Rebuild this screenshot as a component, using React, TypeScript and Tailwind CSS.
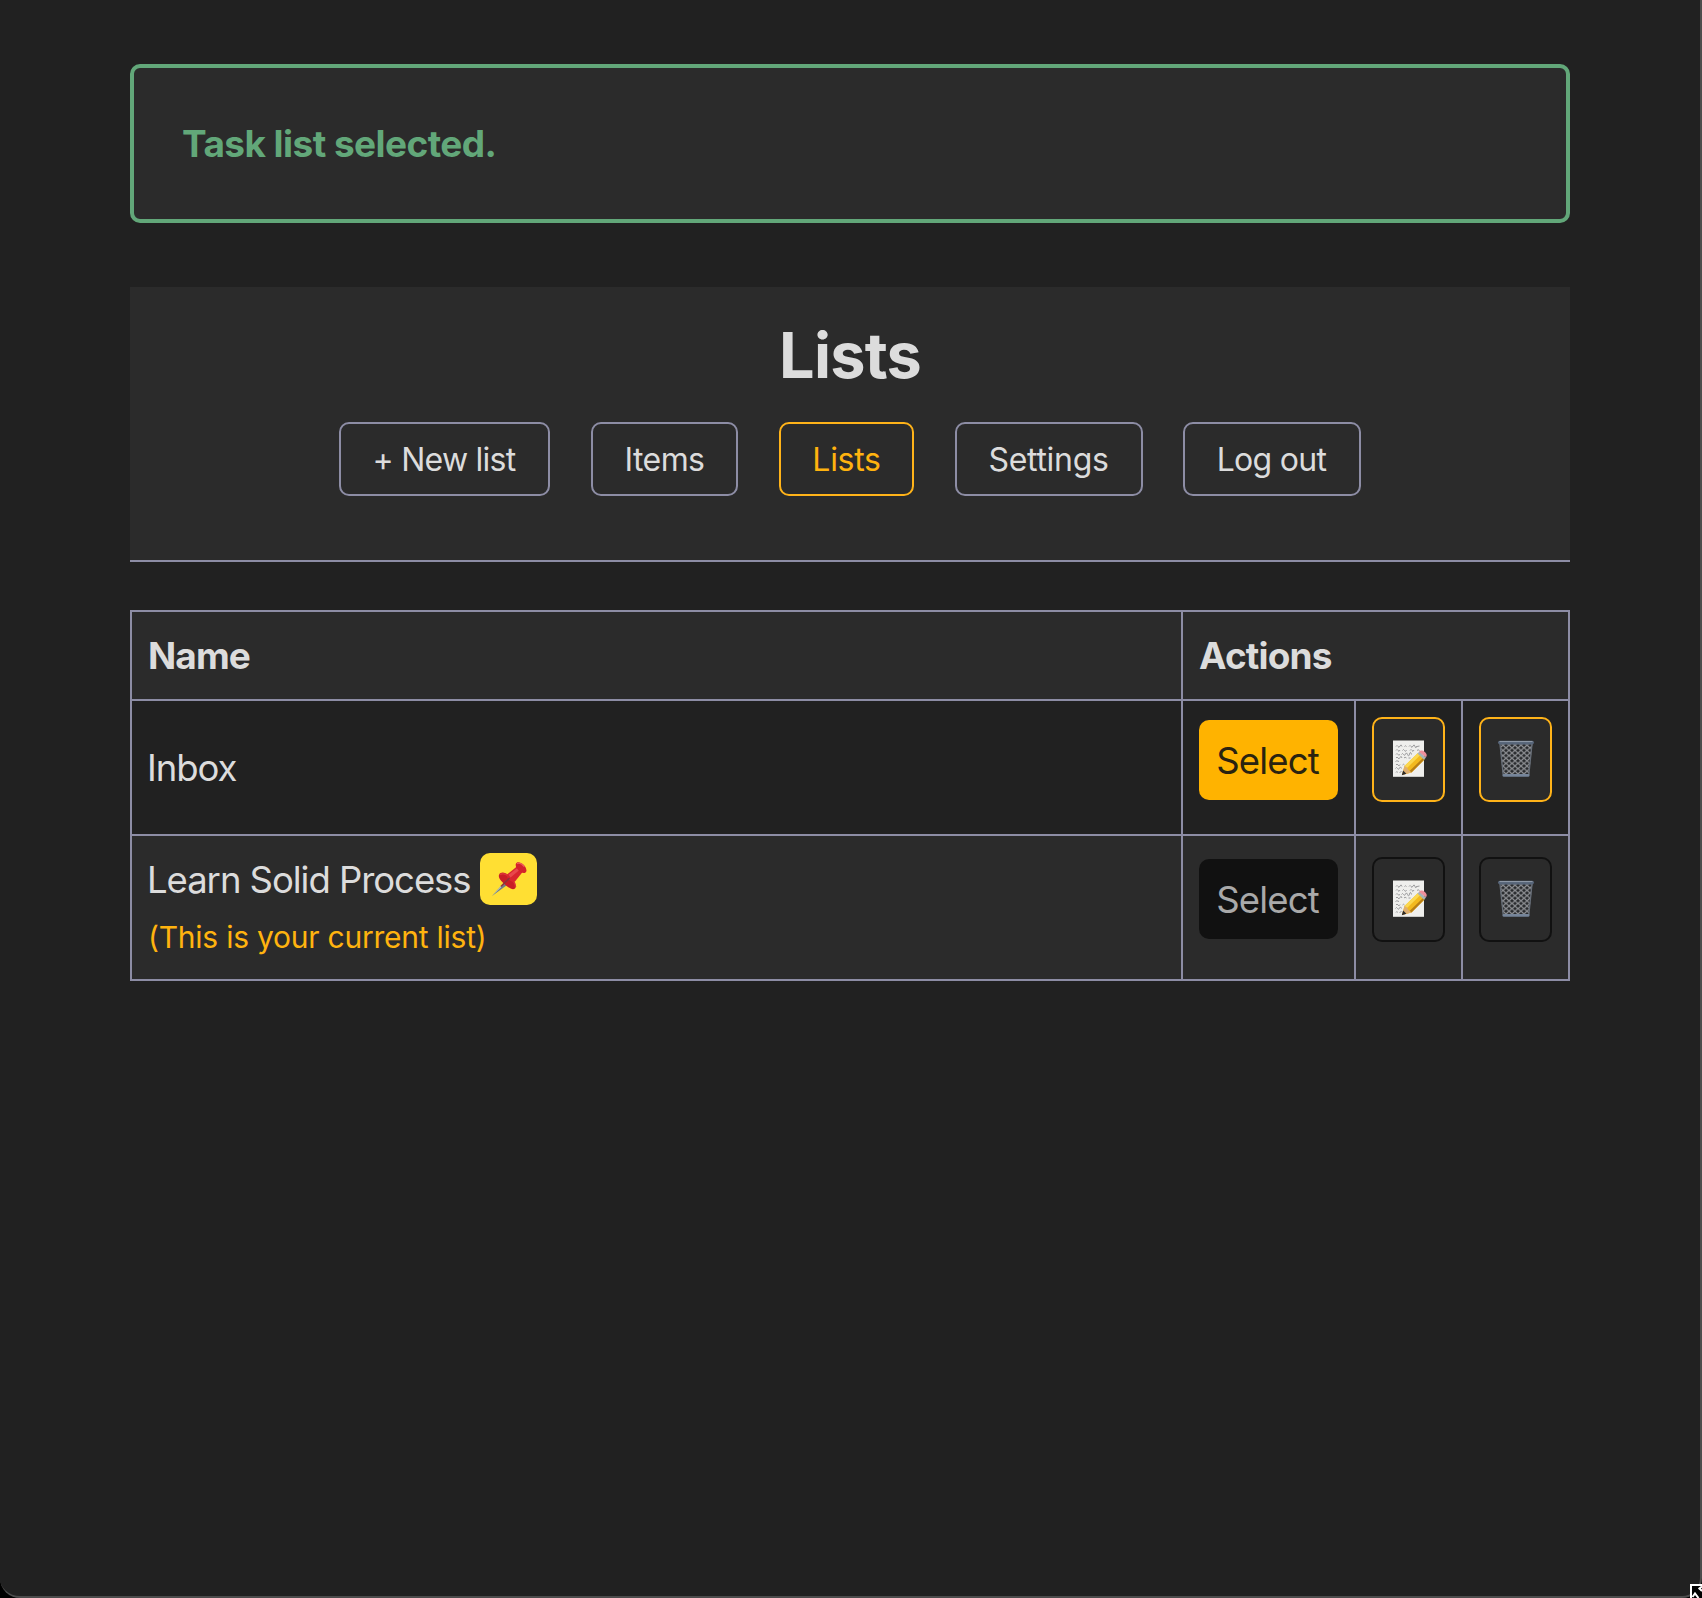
import type { ReactNode } from "react";

function PinIcon() {
  return (
    <svg width="36" height="36" viewBox="0 0 36 36" className="block">
      <path d="M1 35 13 21.5 15.8 24.2Z" fill="#6f8187" />
      <path d="M1 35 13 21.5 14 22.5Z" fill="#c3ccc4" />
      <path d="M8 14c1.500-3.500 6-3 9 .2 3.600 2.800 8.500 9 7.600 12.300-1 3-5.400 1.700-9-1.500C11.500 21.500 6.800 17.300 8 14Z" fill="#c81e26" />
      <path d="M9 13.500c3-1.500 6.500-.5 9.500 2.500 3 2.500 6 6.500 6 10" fill="none" stroke="#dd3439" strokeWidth="1.500" />
      <path d="M16 13.500 26.500 5l5.500 5.500-8 10c-2 1-4 0-6-2-1.500-1.500-2.500-3.500-2-5Z" fill="#d9262e" />
      <path d="M17.500 13.800 27 6.500l2 2-9.500 8Z" fill="#e9474c" />
      <path d="M25 2.500c1.500-2.500 5-1 7.500 1.300 2.500 2.500 4 6 2 7.700-2 1.500-5-.3-7-2.300C25.500 7 24 4.500 25 2.500Z" fill="#d3222b" />
      <path d="M26.500 2.500c2-1 4.500.5 6.500 2.800" fill="none" stroke="#ee5a5a" strokeWidth="1.300" strokeLinecap="round" />
      <path d="M10 25.500 18.500 17" stroke="#8d3438" strokeWidth="1.600" />
    </svg>
  );
}

function MemoIcon() {
  return (
    <svg width="36" height="38" viewBox="0 0 36 38" className="block">
      <rect x="2" y="0.500" width="31" height="36.500" fill="#efefed" />
      <path d="M2 36.500h31" stroke="#c9c9c7" />
      <g fill="none" stroke="#9a9a9c" strokeWidth="1">
        <path d="M5 6.500q1-2 2 0t2-.5 2 .5M13.500 6.500q1-1.500 2 0M18 6.500q1-2 2 0t2-.5 2 .5 1.500-.5M26 6.500l2.500-.5" />
        <path d="M5 10.500q1-2 2 0t2-.5M11.500 10.500q1-2 2 0t2-.5M19 10.500q1-2 2 0t2-.5M26 10.500q1-1.500 2.500 0" />
        <path d="M5 14.500q1-2 2 0t1.500-.5M10.500 14.500q1-2 2 0t2-.5 2 .5 2-.5 2 .5" />
        <path d="M5 18q1-2 2 0t2-.5 2 .5M13 18q1-1.500 2.500 0M17.500 18h2" />
        <path d="M4.500 21.500q1-1.500 3.500 0M5 25q1-2 2 0t2-.5M11.500 25q1-1.500 2 0" />
        <path d="M4.500 28.500q1-2 2 0t2-.5 2 .5M5 32.500q1-2 1.500 0M8.500 32.500l2-1" />
      </g>
      <path d="M11 35 13.500 26 27 13 33.500 19.500 20.500 32.500Z" fill="#f2b91f" />
      <path d="M13.500 26 27 13 29.200 15.200 15.500 28.500Z" fill="#fbd850" />
      <path d="M18.500 31 32 18 33.500 19.500 20.500 32.500Z" fill="#b97f14" />
      <path d="M11 35 13.500 26 16 27.500 17.500 30 20.500 32.500Z" fill="#dfb070" />
      <path d="M10.800 35.300 12.100 30.600 15.400 33.800Z" fill="#2d2b2a" />
      <path d="M26.500 13.500 28.500 11.500 35 17.500 33 19.800Z" fill="#a9b3b6" />
      <path d="M28 12c1.500-2 4-1.800 5.500-.2 2 1.500 3 3.500 1.500 5.400Z" fill="#ee8e9a" />
    </svg>
  );
}

function TrashIcon() {
  return (
    <svg width="38" height="38" viewBox="0 0 38 38" className="block">
      <defs>
        <pattern id="mesh" width="6" height="5.200" patternUnits="userSpaceOnUse">
          <path d="M0 0 6 5.200M6 0 0 5.200" stroke="#8a8c90" strokeWidth="1.200" />
        </pattern>
      </defs>
      <path d="M2.500 3h33L32 36H6Z" fill="#292b2e" />
      <path d="M2.500 3h33L32 36H6Z" fill="url(#mesh)" />
      <path d="M3 4 6.200 35M35 4 31.800 35" stroke="#666d77" strokeWidth="1.300" />
      <rect x="5.500" y="34" width="27" height="2.800" rx="1.400" fill="#76859a" />
      <rect x="1" y="0.800" width="36" height="3.600" rx="1.800" fill="#566478" />
      <path d="M2.500 1.600h33" stroke="#929dac" strokeWidth="1" />
    </svg>
  );
}

function NavButton({ className, children }: { className: string; children: ReactNode }) {
  return (
    <a className={`flex h-[74px] items-center justify-center whitespace-nowrap rounded-[10px] border-2 pt-[2px] text-[32px] leading-none ${className}`}>
      {children}
    </a>
  );
}

function IconButton({ muted, children }: { muted?: boolean; children: ReactNode }) {
  return (
    <button
      className={`flex h-[85px] w-[73px] justify-center rounded-[10px] border-2 bg-[#2b2b2b] pt-[21px] ${muted ? "border-[#111111]" : "border-[#ffb319]"}`}
    >
      {children}
    </button>
  );
}

function SelectButton({ muted }: { muted?: boolean }) {
  return (
    <button
      className={`flex h-20 w-[139px] items-center justify-center rounded-[10px] pr-[2px] pt-[2px] text-[36.500px] leading-none tracking-[-0.850px] ${muted ? "bg-[#111111] text-[#a9a9a9]" : "bg-[#ffb300] text-[#2a2310]"}`}
    >
      Select
    </button>
  );
}

function ResizeCursor() {
  return (
    <svg width="12" height="14" viewBox="0 0 12 14" className="absolute bottom-0 right-0">
      <path d="M0 0h12v14H0Z" fill="#fff" />
      <path d="M2 2h10v12H2Z" fill="#000" />
      <path d="M2.500 13 5 9.500 8.500 14M8.500 5 12 2.500M9 4l3 3" fill="none" stroke="#fff" strokeWidth="2" />
    </svg>
  );
}

export default function App() {
  return (
    <div className="relative h-[1598px] w-[1702px] overflow-hidden bg-black font-['Inter',sans-serif] text-[#dcdcdc]">
      <div className="h-full w-full overflow-hidden rounded-b-[20px] border-b-2 border-r-2 border-[#4c4c4c] bg-[#212121] pl-[130px] pt-16">
        <div className="flex h-[159px] w-[1440px] rounded-[10px] border-4 border-[#62a779] bg-[#2b2b2b] pl-[48px] pt-[52px] text-[37px] font-bold leading-[48px] text-[#62a779]">
          <span className="tracking-[-0.560px]">Task list selected.</span>
        </div>

        <header className="mt-16 h-[275px] w-[1440px] border-b-2 border-[#8d8da5] bg-[#2b2b2b] pt-[28px]">
          <h1 className="text-center text-[63px] font-bold leading-[80px] tracking-[-0.800px]">Lists</h1>
          <nav className="mt-[27px] flex pl-[209px]">
            <NavButton className="w-[211px] border-[#8d8da5] pr-px tracking-[-0.750px]">+ New list</NavButton>
            <NavButton className="ml-[41px] w-[147px] border-[#8d8da5] tracking-[-0.600px]">Items</NavButton>
            <NavButton className="ml-[41px] w-[135px] border-[#ffb319] tracking-[-0.300px] text-[#ffb30f]">Lists</NavButton>
            <NavButton className="ml-[41px] w-[188px] border-[#8d8da5] pr-px tracking-[-0.300px]">Settings</NavButton>
            <NavButton className="ml-[40px] w-[178px] border-[#8d8da5] pr-px tracking-[-0.700px]">Log out</NavButton>
          </nav>
        </header>

        <div className="mt-12 grid w-[1440px] grid-cols-[1049px_171px_105px_105px] grid-rows-[87px_133px_143px] gap-[2px] border-2 border-[#8d8da5] bg-[#8d8da5] text-[36.500px] leading-[48px]">
          <div className="bg-[#2b2b2b] pl-4 pt-5 text-[37px] font-bold tracking-[-0.900px]">Name</div>
          <div className="col-span-3 bg-[#2b2b2b] pl-4 pt-5 text-[37px] font-bold tracking-[-0.850px]">Actions</div>

          <div className="bg-[#212121] pl-[15px] pt-[43px] tracking-[-1.050px]">Inbox</div>
          <div className="bg-[#212121] pl-4 pt-[19px]"><SelectButton /></div>
          <div className="bg-[#212121] pl-4 pt-4"><IconButton><MemoIcon /></IconButton></div>
          <div className="bg-[#212121] pl-4 pt-4"><IconButton><TrashIcon /></IconButton></div>

          <div className="bg-[#2b2b2b] pl-[15px] pt-[17px]">
            <div className="flex h-[52px]">
              <span className="w-[333px] whitespace-nowrap pt-[3px] tracking-[-1.050px]">Learn Solid Process</span>
              <span className="flex h-[52px] w-[57px] items-center justify-center rounded-[10px] bg-[#ffdf33]"><PinIcon /></span>
            </div>
            <div className="mt-2 pl-px text-[30px] tracking-[-0.240px] text-[#ffb30f]">(This is your current list)</div>
          </div>
          <div className="bg-[#2b2b2b] pl-4 pt-[23px]"><SelectButton muted /></div>
          <div className="bg-[#2b2b2b] pl-4 pt-[21px]"><IconButton muted><MemoIcon /></IconButton></div>
          <div className="bg-[#2b2b2b] pl-4 pt-[21px]"><IconButton muted><TrashIcon /></IconButton></div>
        </div>
      </div>
      <ResizeCursor />
    </div>
  );
}
